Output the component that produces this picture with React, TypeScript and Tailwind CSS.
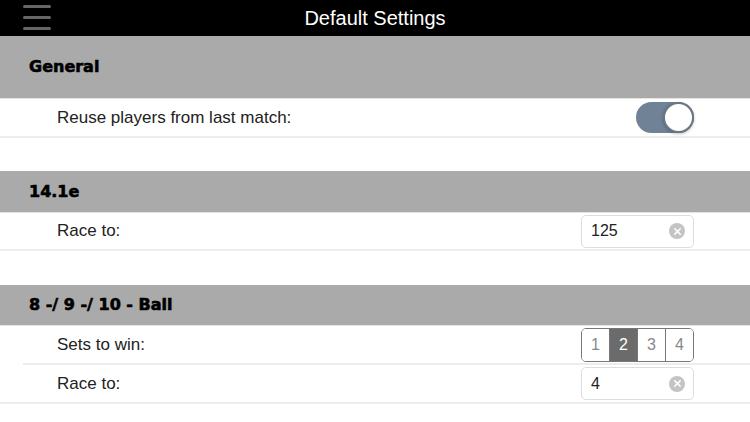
import { X } from "lucide-react";

function SectionHeader({ title, h = "h-[42px]" }: { title: string; h?: string }) {
  return (
    <div className={`flex ${h} items-center bg-[#aaaaaa] px-[29px] border-b border-[#e4e4e4]`}>
      <span className="text-[16px] font-bold text-black [-webkit-text-stroke:0.6px_black]" style={{ fontFamily: "'DejaVu Sans', sans-serif" }}>
        {title}
      </span>
    </div>
  );
}

function Row({ label, children, h = "h-[39px]", inset = false }: { label: string; children?: React.ReactNode; h?: string; inset?: boolean }) {
  return (
    <div className={inset ? "pl-[23px]" : ""}>
      <div className={`flex ${h} items-center justify-between border-b-2 border-[#ededed] pr-[56px] ${inset ? "pl-[34px]" : "pl-[57px]"}`}>
        <span className="text-[17px] text-[#222]">{label}</span>
        {children}
      </div>
    </div>
  );
}

function Toggle() {
  return (
    <div className="relative h-[31px] w-[58px] rounded-full bg-[#6f8296]">
      <div className="absolute right-0 top-0 h-[31px] w-[31px] rounded-full border-2 border-[#6b7783] bg-white shadow-[0_1px_3px_rgba(0,0,0,0.25)]" />
    </div>
  );
}

function ClearInput({ value }: { value: string }) {
  return (
    <div className="flex h-[33px] w-[113px] items-center justify-between rounded-[5px] border border-[#dddddd] bg-white pl-[9px] pr-[8px]">
      <span className="text-[16px] text-[#222]">{value}</span>
      <span className="flex h-[16px] w-[16px] items-center justify-center rounded-full bg-[#c4c4c4]">
        <X size={11} strokeWidth={3.5} color="white" />
      </span>
    </div>
  );
}

function Segmented() {
  const options = ["1", "2", "3", "4"];
  return (
    <div className="flex h-[34px] w-[113px] overflow-hidden rounded-[5px] border border-[#777]">
      {options.map((o, i) => (
        <div
          key={o}
          className={`flex flex-1 items-center justify-center text-[16px] ${i > 0 ? "border-l border-[#777]" : ""} ${o === "2" ? "bg-[#6b6b6b] text-white" : "bg-white text-[#888]"}`}>
          {o}
        </div>
      ))}
    </div>
  );
}

export default function App() {
  return (
    <div className="h-[422px] w-[750px] overflow-hidden bg-white" style={{ fontFamily: "'Liberation Sans', Arial, sans-serif" }}>
      {/* Top bar */}
      <div className="relative flex h-[36px] items-center justify-center bg-black">
        <div className="absolute left-[23px] top-[5px] flex w-[28px] flex-col gap-[8px]">
          <div className="h-[3px] rounded-full bg-[#666]" />
          <div className="h-[3px] rounded-full bg-[#666]" />
          <div className="h-[3px] rounded-full bg-[#666]" />
        </div>
        <span className="text-[20px] text-white">Default Settings</span>
      </div>

      {/* General */}
      <SectionHeader title="General" h="h-[63px]" />
      <Row label="Reuse players from last match:">
        <Toggle />
      </Row>
      <div className="h-[33px]" />

      {/* 14.1e */}
      <SectionHeader title="14.1e" />
      <Row label="Race to:" h="h-[38px]">
        <ClearInput value="125" />
      </Row>
      <div className="h-[34px]" />

      {/* 8/9/10 ball */}
      <SectionHeader title="8 -/ 9 -/ 10 - Ball" h="h-[41px]" />
      <Row label="Sets to win:" inset>
        <Segmented />
      </Row>
      <Row label="Race to:">
        <ClearInput value="4" />
      </Row>
    </div>
  );
}
